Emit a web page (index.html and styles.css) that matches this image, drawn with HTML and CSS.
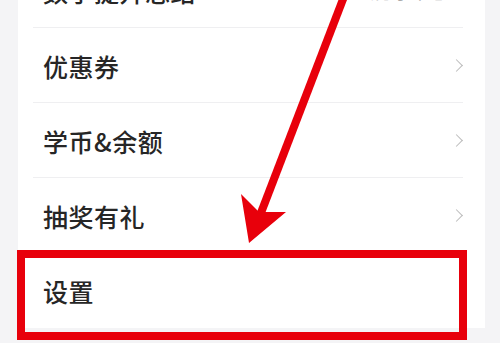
FILE: index.html
```html
<!DOCTYPE html>
<html lang="zh-CN">
<head>
    <meta charset="UTF-8">
    <meta name="viewport" content="width=device-width, initial-scale=1.0">
    <title>我的</title>
    <link rel="stylesheet" href="styles.css">
</head>
<body>
    <div class="page">
        <div class="card">
            <div class="row row-first">
                <span class="label">数学提升总结</span>
                <span class="extra">去分享中心</span>
            </div>
            <div class="row">
                <span class="label">优惠券</span>
                <span class="chevron"></span>
            </div>
            <div class="row">
                <span class="label">学币&amp;余额</span>
                <span class="chevron"></span>
            </div>
            <div class="row">
                <span class="label">抽奖有礼</span>
                <span class="chevron"></span>
            </div>
            <div class="row row-last">
                <span class="label">设置</span>
            </div>
        </div>

        <!-- 标注 -->
        <div class="mark-box"></div>
        <svg class="mark-arrow" width="500" height="343" viewBox="0 0 500 343">
            <line x1="345" y1="-6" x2="259" y2="218" stroke="#e8000b" stroke-width="8"/>
            <polygon points="241,194 259,212 286,212 249,243" fill="#e8000b"/>
        </svg>
    </div>
</body>
</html>
```

FILE: styles.css
```css
body {
    margin: 0;
    background: #f4f4f6;
    font-family: "Noto Sans CJK SC", "Noto Sans", sans-serif;
    overflow: hidden;
}
.page {
    position: relative;
    width: 500px;
    height: 343px;
    overflow: hidden;
}
.card {
    margin-left: 18px;
    width: 467px;
    background: #fff;
    margin-top: -47px;
}
.row {
    height: 75px;
    box-sizing: border-box;
    padding: 0 20px 0 25px;
    display: flex;
    align-items: center;
    justify-content: space-between;
    position: relative;
}
.row::after {
    content: "";
    position: absolute;
    left: 15px;
    right: 22px;
    bottom: 0;
    height: 1px;
    background: #efeff1;
}
.row-last::after {
    display: none;
}
.label {
    font-size: 25px;
    font-weight: 500;
    color: #262626;
    letter-spacing: 0.5px;
}
.extra {
    font-size: 18px;
    color: #aaa;
    margin-right: 18px;
}
.chevron {
    width: 8px;
    height: 8px;
    border-top: 1.7px solid #bbb;
    border-right: 1.7px solid #bbb;
    transform: rotate(45deg);
    margin-right: 4px;
}
.mark-box {
    position: absolute;
    left: 17px;
    top: 250px;
    width: 450px;
    height: 90px;
    box-sizing: border-box;
    border: 8px solid #e8000b;
}
.mark-arrow {
    position: absolute;
    left: 0;
    top: 0;
}
```
